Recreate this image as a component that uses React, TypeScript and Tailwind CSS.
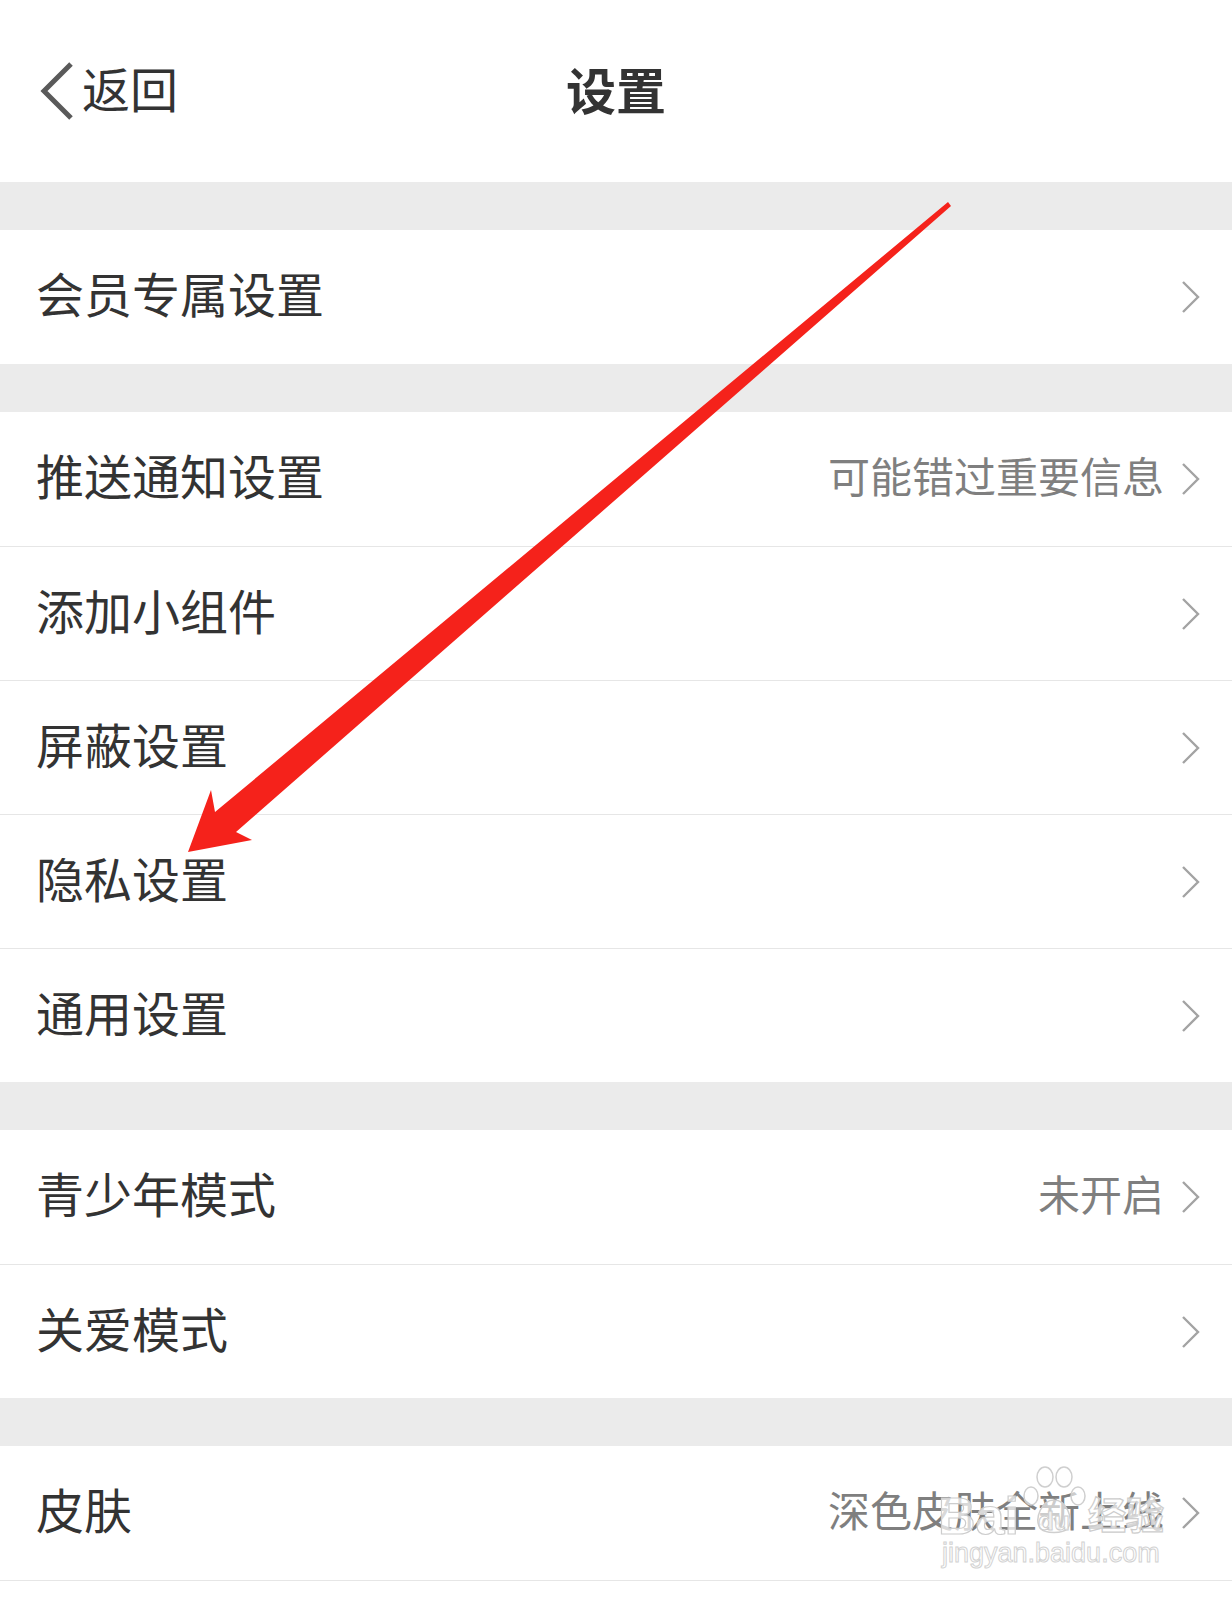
import React from 'react';

type Item = { label: string; value?: string };

const groups: Item[][] = [
  [{ label: '会员专属设置' }],
  [
    { label: '推送通知设置', value: '可能错过重要信息' },
    { label: '添加小组件' },
    { label: '屏蔽设置' },
    { label: '隐私设置' },
    { label: '通用设置' },
  ],
  [{ label: '青少年模式', value: '未开启' }, { label: '关爱模式' }],
  [{ label: '皮肤', value: '深色皮肤全新上线' }],
];

function Chevron() {
  return (
    <svg width="20" height="34" viewBox="0 0 20 34" className="shrink-0">
      <polyline points="2,2 17,17 2,32" fill="none" stroke="#a3a3a3" strokeWidth="2.4" strokeLinejoin="miter" />
    </svg>
  );
}

function Row({ item, first }: { item: Item; first: boolean }) {
  return (
    <div
      className={`flex items-center justify-between h-[134px] pl-[36px] pr-[31px] bg-white ${
        first ? '' : 'border-t border-[#e6e6e6]'
      }`}
    >
      <span className="mb-[10px] text-[48px] leading-none text-[#333333]">{item.label}</span>
      <div className="flex items-center gap-[17px]">
        {item.value && <span className="mb-[8px] text-[42px] leading-none text-[#7f7f7f]">{item.value}</span>}
        <Chevron />
      </div>
    </div>
  );
}

export default function App() {
  return (
    <div className="relative w-[1232px] h-[1600px] overflow-hidden bg-white font-['Noto_Sans_CJK_SC','Noto_Sans',sans-serif]">
      <header className="relative flex items-center justify-center h-[182px] bg-white">
        <div className="absolute left-[38px] top-[61px] flex items-center gap-[8px]">
          <svg width="36" height="60" viewBox="0 0 36 60">
            <polyline points="33,3 6,30 33,57" fill="none" stroke="#5a5a5a" strokeWidth="5" />
          </svg>
          <span className="mb-[8px] text-[48px] leading-none text-[#333333]">返回</span>
        </div>
        <h1 className="mb-[6px] text-[50px] leading-none font-bold text-[#333333]">设置</h1>
      </header>

      {groups.map((group, gi) => (
        <div key={gi} className="pt-[48px] bg-[#ebebeb]">
          {group.map((item, i) => (
            <Row key={item.label} item={item} first={i === 0} />
          ))}
        </div>
      ))}
      <div className="h-[40px] bg-white border-t border-[#e6e6e6]" />

      {/* watermark */}
      <div className="absolute left-[936px] top-[1466px] w-[236px] h-[104px] pointer-events-none">
        <span className="absolute left-[2px] top-[24px] text-[52px] leading-none font-bold text-white/70 [-webkit-text-stroke:1.2px_#cdcdcd] font-['Liberation_Sans',sans-serif]">
          Bai
        </span>
        <svg className="absolute left-[80px] top-0" width="76" height="70" viewBox="0 0 76 70">
          <g fill="rgba(255,255,255,0.6)" stroke="#cfcfcf" strokeWidth="1.5">
            <ellipse cx="29" cy="11" rx="8" ry="10" />
            <ellipse cx="48" cy="11" rx="8" ry="10" />
            <ellipse cx="15" cy="30" rx="7" ry="9" />
            <ellipse cx="62" cy="30" rx="7" ry="9" />
            <path d="M38 34 C26 34 18 52 24 62 C29 68 47 68 52 62 C58 52 50 34 38 34 Z" />
          </g>
          <text x="38" y="64" textAnchor="middle" fontSize="26" fontWeight="bold" fill="rgba(255,255,255,0.7)" stroke="#cdcdcd" strokeWidth="1" fontFamily="Liberation Sans, sans-serif">du</text>
        </svg>
        <span className="absolute left-[152px] top-[28px] text-[38px] leading-none font-bold text-white/70 [-webkit-text-stroke:1.2px_#cdcdcd]">
          经验
        </span>
        <span className="absolute left-[6px] top-[74px] text-[27px] leading-none text-white/80 [-webkit-text-stroke:1px_#d2d2d2] font-['Liberation_Sans_Narrow','Liberation_Sans',sans-serif]">
          jingyan.baidu.com
        </span>
      </div>

      {/* annotation arrow */}
      <svg className="absolute left-0 top-0 pointer-events-none" width="1232" height="1600">
        <polygon
          points="188,852 211,790 215,812 948,202 951,206 236,832 252,840"
          fill="#f5221b"
        />
      </svg>
    </div>
  );
}
